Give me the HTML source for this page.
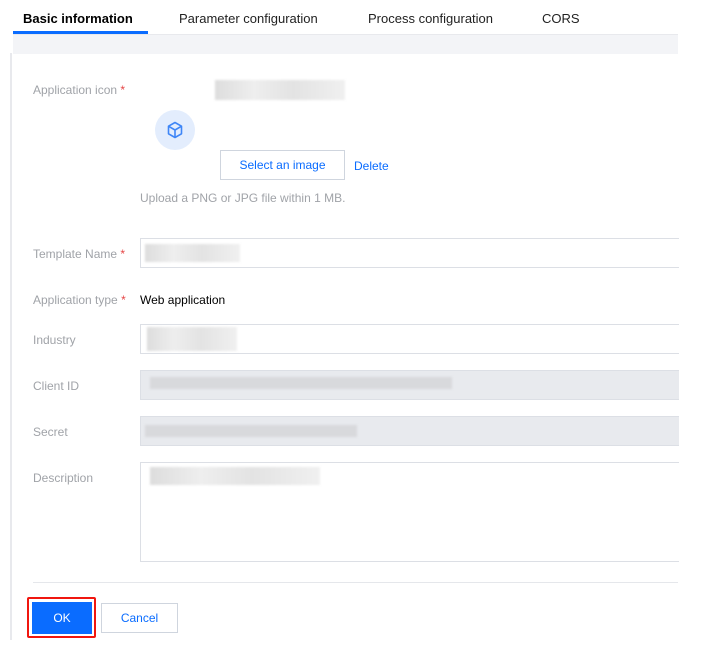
<!DOCTYPE html><html><head><style>
body{margin:0;width:701px;height:647px;background:#fff;font-family:"Liberation Sans",sans-serif;font-size:12px;position:relative;overflow:hidden}
#c{position:absolute;left:0;top:0;width:679px;height:647px;overflow:hidden}
.a{position:absolute}
.lab{position:absolute;left:33px;color:#a0a3a8;font-size:12px}
.req{color:#e54545}
.inp{position:absolute;left:140px;width:580px;border:1px solid #dcdfe5;box-sizing:border-box}
.blur{position:absolute;background:linear-gradient(90deg,#ddd,#eee 30%,#e3e3e3 60%,#f0f0f0);filter:blur(1px)}
</style></head><body><div id="c">
<div class="a" style="left:23px;top:11px;font-weight:bold;font-size:13px;color:#000">Basic information</div>
<div class="a" style="left:179px;top:11px;font-size:13px;color:#222">Parameter configuration</div>
<div class="a" style="left:368px;top:11px;font-size:13px;color:#222">Process configuration</div>
<div class="a" style="left:542px;top:11px;font-size:13px;color:#222">CORS</div>
<div class="a" style="left:13px;top:31px;width:135px;height:3px;background:#0a6cff"></div>
<div class="a" style="left:13px;top:34px;width:665px;height:19px;background:#f3f4f7;border-top:1px solid #e8e9ed"></div>
<div class="a" style="left:10px;top:53px;width:2px;height:587px;background:#e8e9ed"></div>
<div class="lab" style="top:83px">Application icon <span class="req">*</span></div>
<div class="blur" style="left:215px;top:80px;width:130px;height:20px"></div>
<div class="a" style="left:155px;top:110px;width:40px;height:40px;border-radius:50%;background:#e3edfd"></div>
<svg class="a" style="left:165px;top:120px" width="20" height="20" viewBox="0 0 20 20" fill="none" stroke="#3f86f7" stroke-width="1.6" stroke-linejoin="round"><path d="M10 2.5L16.5 6.2V13.8L10 17.5L3.5 13.8V6.2Z"/><path d="M3.5 6.2L10 10L16.5 6.2M10 10V17.5"/></svg>
<div class="a" style="left:220px;top:150px;width:125px;height:30px;border:1px solid #cfd5de;box-sizing:border-box;color:#0a6cff;text-align:center;line-height:28px">Select an image</div>
<div class="a" style="left:354px;top:159px;color:#0a6cff">Delete</div>
<div class="a" style="left:140px;top:191px;color:#a0a3a8">Upload a PNG or JPG file within 1 MB.</div>
<div class="lab" style="top:247px">Template Name <span class="req">*</span></div>
<div class="inp" style="top:238px;height:30px"></div>
<div class="blur" style="left:145px;top:244px;width:95px;height:18px"></div>
<div class="lab" style="top:293px">Application type <span class="req">*</span></div>
<div class="a" style="left:140px;top:293px;color:#000">Web application</div>
<div class="lab" style="top:333px">Industry</div>
<div class="inp" style="top:324px;height:30px"></div>
<div class="blur" style="left:147px;top:327px;width:90px;height:24px"></div>
<div class="lab" style="top:379px">Client ID</div>
<div class="inp" style="top:370px;height:30px;background:#e8eaee"></div>
<div class="blur" style="left:150px;top:377px;width:302px;height:12px;background:#d8d9dc"></div>
<div class="lab" style="top:425px">Secret</div>
<div class="inp" style="top:416px;height:30px;background:#e8eaee"></div>
<div class="blur" style="left:145px;top:425px;width:212px;height:12px;background:#d8d9dc"></div>
<div class="lab" style="top:471px">Description</div>
<div class="inp" style="top:462px;height:100px"></div>
<div class="blur" style="left:150px;top:467px;width:170px;height:18px"></div>
<div class="a" style="left:33px;top:582px;width:645px;height:1px;background:#e5e7eb"></div>
<div class="a" style="left:27px;top:597px;width:65px;height:37px;border:2px solid #f0160f;border-radius:2px"></div>
<div class="a" style="left:32px;top:602px;width:60px;height:32px;background:#0a6cff;color:#fff;text-align:center;line-height:32px">OK</div>
<div class="a" style="left:101px;top:603px;width:77px;height:30px;border:1px solid #cfd5de;box-sizing:border-box;color:#0a6cff;text-align:center;line-height:28px">Cancel</div>
</div></body></html>
